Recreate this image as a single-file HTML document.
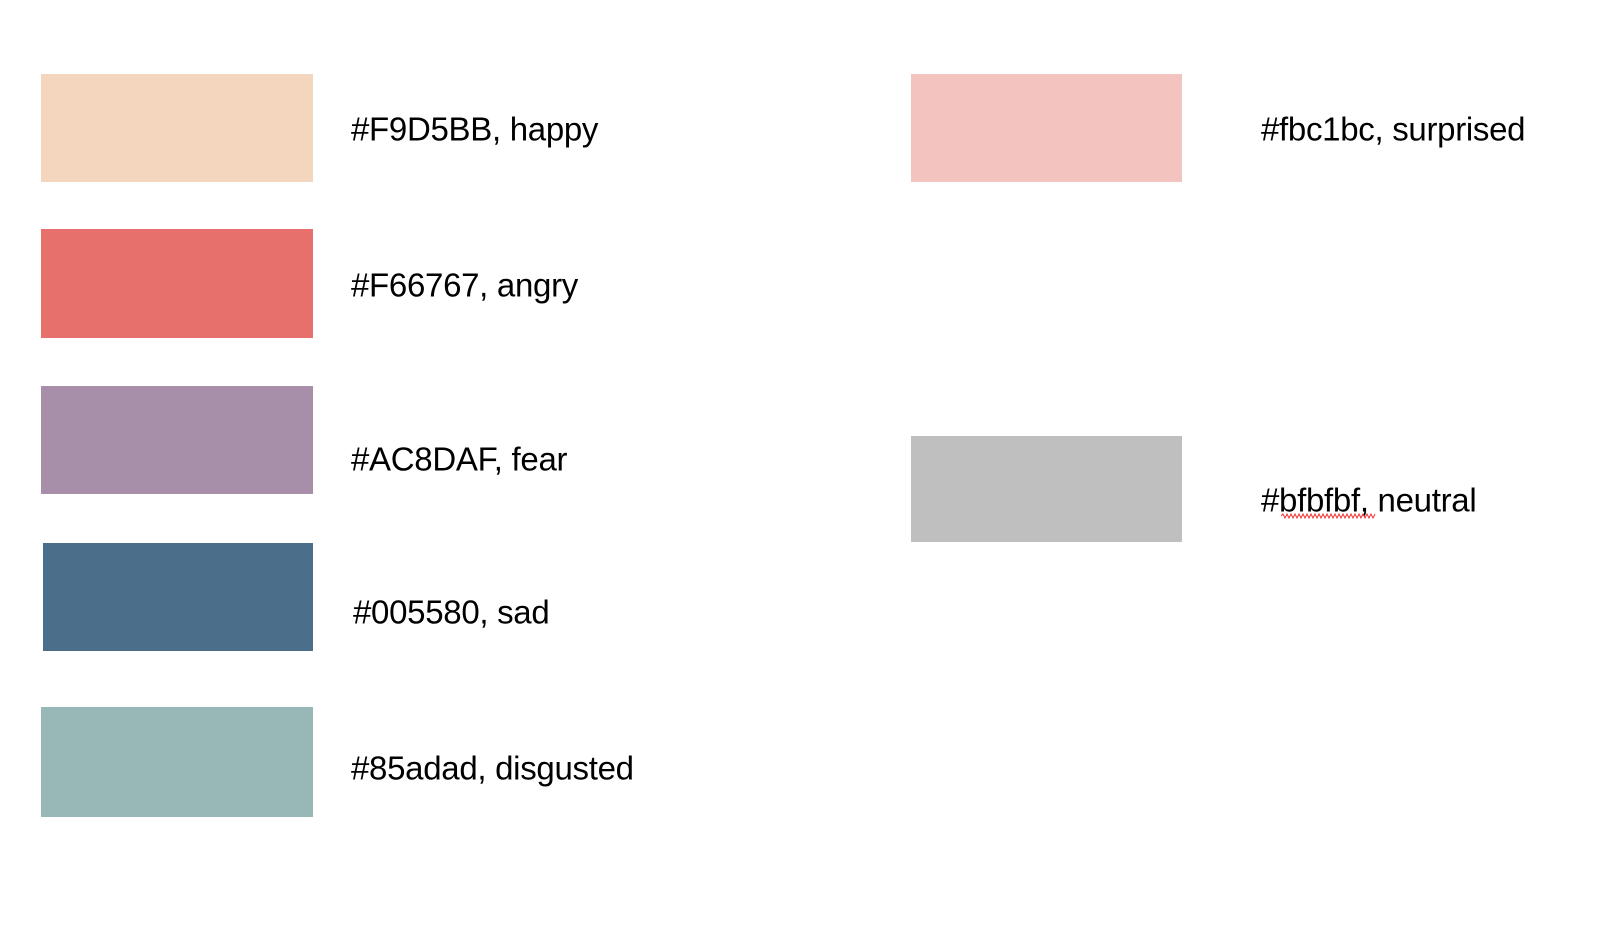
<!DOCTYPE html>
<html><head><style>
body{margin:0;width:1612px;height:934px;background:#fff;position:relative;overflow:hidden;font-family:"Liberation Sans",sans-serif;}
.s{position:absolute}
.t{position:absolute;font-size:33px;color:#000;line-height:1;transform:translateY(-50%);white-space:nowrap;letter-spacing:-0.3px}
</style></head><body>
<div class="s" style="left:41px;top:74px;width:272px;height:108px;background:#f3d6bd"></div>
<div class="s" style="left:41px;top:229px;width:272px;height:109px;background:#e7706c"></div>
<div class="s" style="left:41px;top:386px;width:272px;height:108px;background:#a78ea9"></div>
<div class="s" style="left:43px;top:543px;width:270px;height:108px;background:#4b6f8b"></div>
<div class="s" style="left:41px;top:707px;width:272px;height:110px;background:#97b8b6"></div>
<div class="s" style="left:911px;top:74px;width:271px;height:108px;background:#f3c4bf"></div>
<div class="s" style="left:911px;top:436px;width:271px;height:106px;background:#bfbfbf"></div>
<div class="t" style="left:351px;top:129px">#F9D5BB, happy</div>
<div class="t" style="left:351px;top:285px">#F66767, angry</div>
<div class="t" style="left:351px;top:459px">#AC8DAF, fear</div>
<div class="t" style="left:353px;top:612px">#005580, sad</div>
<div class="t" style="left:351px;top:768px">#85adad, disgusted</div>
<div class="t" style="left:1261px;top:129px">#fbc1bc, surprised</div>
<div class="t" style="left:1261px;top:500px">#bfbfbf, neutral</div>
<svg style="position:absolute;left:1281px;top:513px" width="98" height="6"><path d="M0 3 l2 -2 l2 4 l2 -4 l2 4 l2 -4 l2 4 l2 -4 l2 4 l2 -4 l2 4 l2 -4 l2 4 l2 -4 l2 4 l2 -4 l2 4 l2 -4 l2 4 l2 -4 l2 4 l2 -4 l2 4 l2 -4 l2 4 l2 -4 l2 4 l2 -4 l2 4 l2 -4 l2 4 l2 -4 l2 4 l2 -4 l2 4 l2 -4 l2 4 l2 -4 l2 4 l2 -4 l2 4 l2 -4 l2 4 l2 -4 l2 4 l2 -4 l2 4 l2 -4" fill="none" stroke="#e33" stroke-width="1"/></svg>
</body></html>
